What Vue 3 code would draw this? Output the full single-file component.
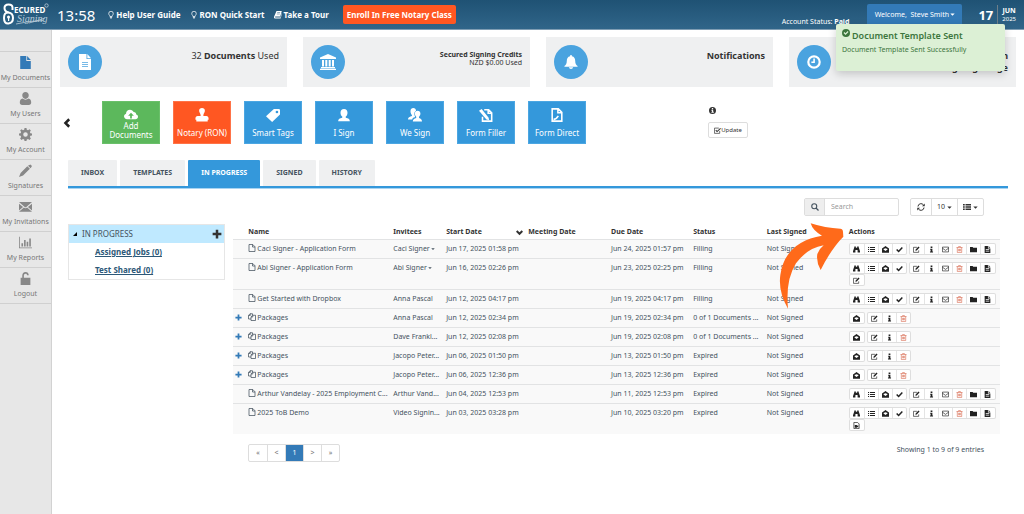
<script setup>
import { h } from 'vue'

const line = 'fill="none" stroke="currentColor" stroke-width="1.5"'
const icons = {
  file: '<path d="M1.500 0H9v6h5.500v10h-13z"/><path d="M10 0l4.500 5H10z"/>',
  fileText: '<path fill-rule="evenodd" d="M2 0h7.500v5H14v11H2zM5 8v.8h6V8zm0 2v.8h6V10zm0 2v.8h6V12z"/><path d="M10.300 0L14 4.200h-3.700z"/>',
  user: '<path d="M8 0c2.500 0 4 1.600 4 4S10.300 8.500 8 8.500 4 6.400 4 4 5.500 0 8 0zM4.500 8c1 1 2.200 1.400 3.500 1.400s2.500-.4 3.500-1.400C14 8.300 15 10 15 13c0 2-1 3-3 3H4c-2 0-3-1-3-3 0-3 1-4.700 3.500-5z"/>',
  cog: '<path fill-rule="evenodd" d="M6.800 0h2.400l.4 2.200 1.500.6 1.900-1.300 1.600 1.600-1.200 1.900.6 1.500 2 .4v2.300l-2 .4-.6 1.600 1.200 1.800-1.600 1.700-1.900-1.300-1.500.6-.4 2H6.800l-.4-2-1.500-.6L3 14.700 1.400 13l1.200-1.800L2 9.600l-2-.4V6.900l2-.4.6-1.500-1.200-1.900L3 1.500l1.900 1.300 1.500-.6zM8 5.200a2.800 2.800 0 1 0 0 5.600 2.800 2.800 0 0 0 0-5.600z"/>',
  pencil: '<path d="M11 2l3-1.500L16 2.500 14.300 5.200zM10.200 2.800l3.200 3L5 14l-5 2 2-5z"/>',
  mail: '<path d="M0 2.500h16L9 8.500q-1 .8-2 0zM0 4.500l5 4-5 4.500zM16 4.500l-5 4 5 4.500zM0 14.500L6 9.300q2 1.600 4 0l6 5.200z"/>',
  chart: '<path d="M0 1h1v13h15v1H0zM3 9h2v4H3zM6.200 5h2v8h-2zM9.400 7h2v6h-2zM12.600 3h2v10h-2z"/>',
  unlock: '<path d="M2 7h2V4.500C4 1.800 5.600 0 8 0s4 1.500 4 4h-2c0-1.300-.8-2-2-2s-2 .9-2 2.500V7h8v9H2z"/>',
  bulb: '<path ' + line + ' d="M5.800 11C5.800 8.500 3.500 8 3.500 5a4.500 4.500 0 0 1 9 0c0 3-2.300 3.500-2.300 6zM5.800 13h4.400M7 15.200h2"/>',
  book: '<path fill-rule="evenodd" d="M5 0h10.500L12.500 11H3c-1.500 0-1.500 2 0 2h10L15.500 4l.5 1-2.800 10H3c-3 0-3.500-2-2.700-4zM6.500 3l-.3 1.200h6L12.500 3zM5.800 5.500l-.3 1.200h6l.3-1.200z"/>',
  bank: '<path d="M8 0l8 3.500V5H0V3.500zM2 6h2v6.500H2zM5.300 6h2v6.500h-2zM8.700 6h2v6.500h-2zM12 6h2v6.500h-2zM1 13h14v1.200H1zM0 14.800h16V16H0z"/>',
  bell: '<path d="M8 0c.8 0 1 .5 1 1.300 2.800.6 3.800 2.700 3.800 5.200 0 3.500 1.200 4.800 2.700 6V13.500H.5v-1c1.500-1.200 2.700-2.500 2.700-6 0-2.500 1-4.600 3.800-5.200C7 .5 7.200 0 8 0zM5.500 14h5Q10 16 8 16t-2.500-2z"/>',
  clock: '<circle cx="8" cy="8" r="6.500" fill="none" stroke="currentColor" stroke-width="2.500"/><path d="M7.200 4h1.800v5H5V7.500h2.200z"/>',
  cloud: '<path fill-rule="evenodd" d="M3.500 14C1.500 14 0 12.500 0 10.700c0-1.500 1-2.700 2.300-3.100C2.300 4.600 4.500 3 6.800 3c2 0 3.600 1.100 4.200 2.800 2 0 3 1.300 2.900 2.800 1.300.3 2.100 1.300 2.100 2.600 0 1.700-1.200 2.800-3 2.800zM8 6.500L4.700 10H7v3h2v-3h2.300z"/>',
  stamp: '<path d="M8 0c2 0 3.300 1.400 3.300 3C11.300 5 9.500 6 9.500 9H13c1.500 0 2.500 1 2.500 3v1.500h-1V15.500h-13V13.500h-1V12c0-2 1-3 2.500-3h3.500c0-3-1.800-4-1.800-6 0-1.600 1.300-3 3.300-3z"/>',
  tag: '<path fill-rule="evenodd" d="M9 1h6l1 1v5.500L7 16 0 9.500zM12.500 3a1.500 1.500 0 1 0 0 3 1.500 1.500 0 0 0 0-3z"/>',
  person: '<path d="M8 1c2.600 0 4 1.700 4 4.300 0 2-.8 3.500-2 4.400v1.500c3 .8 4.500 1.300 4.700 3.800H1.300c.2-2.500 1.700-3 4.700-3.800V9.700C4.800 8.800 4 7.300 4 5.300 4 2.700 5.400 1 8 1z"/>',
  people: '<path d="M6 0c2 0 3 1 3.200 3C7.400 4 7 6 7.400 8l.8 2.400c-2 .6-3 1-3.400 2.600H0c0-2.600 2-3 4.500-4V8C3.300 7 2.700 5 2.900 3.200 3 1 4.200 0 6 0z"/><path d="M11 3c2 0 3.200 1.300 3.200 3.400 0 1.600-.6 2.800-1.600 3.600v1.300c2 .8 3.400 1.500 3.400 4.200H5.500c0-2.700 1.500-3.400 3.900-4.200V10c-1-.8-1.600-2-1.600-3.600C7.800 4.300 9 3 11 3z"/>',
  formFill: '<path fill="none" stroke="currentColor" stroke-width="1.800" d="M6 2h5l3.500 3.500V15H4v-5M10.500 2v4h4"/><path d="M0 3l3-2 8 10 .5 3L8.500 13z"/>',
  formDirect: '<path fill="none" stroke="currentColor" stroke-width="1.800" d="M2.500 1h7L13.500 5v10h-11zM9 1v4.500h4.500M4 13q3 0 5.500-4"/>',
  chevron: '<path fill="none" stroke="currentColor" stroke-width="4" d="M11.500 2L5.500 8l6 6"/>',
  chevDown: '<path fill="none" stroke="currentColor" stroke-width="4.500" d="M1.500 4.500L8 11l6.500-6.500"/>',
  info: '<path fill-rule="evenodd" d="M8 0a8 8 0 1 0 0 16A8 8 0 0 0 8 0zM6.500 2.500h3v2.500h-3zM5.500 6.500h4V11h1.500v2H5.500v-2H7V8.500H5.500z"/>',
  checkBox: '<path fill="none" stroke="currentColor" stroke-width="1.600" d="M13 9v5.500H1V2.500h10"/><path fill="none" stroke="currentColor" stroke-width="2.400" d="M4 7l3 3.500L15 3"/>',
  okCircle: '<path fill-rule="evenodd" d="M8 0a8 8 0 1 0 0 16A8 8 0 0 0 8 0zM3 8l1.800-1.800L7 8.300l4.300-4.200L13 5.900l-6 6z"/>',
  search: '<circle cx="6.500" cy="6.500" r="5" fill="none" stroke="currentColor" stroke-width="2.200"/><path stroke="currentColor" stroke-width="2.600" d="M10 10l5 5"/>',
  refresh: '<path fill="none" stroke="currentColor" stroke-width="2" d="M2 7a6 6 0 0 1 11-3M14 9a6 6 0 0 1-11 3"/><path d="M15.500 1v5.500H10zM.5 15V9.500H6z"/>',
  list: '<path d="M0 2h3.500v3H0zM5 2h11v3H5zM0 6.500h3.500v3H0zM5 6.500h11v3H5zM0 11h3.500v3H0zM5 11h11v3H5z"/>',
  lines: '<path d="M0 2.500h2.500v2H0zM4.500 2.500H16v2H4.500zM0 7h2.500v2H0zM4.500 7H16v2H4.500zM0 11.500h2.500v2H0zM4.500 11.500H16v2H4.500z"/>',
  plus: '<path d="M6 1h4v5h5v4h-5v5H6v-5H1V6h5z"/>',
  page: '<path ' + line + ' d="M2 1h7.500L14 5.500V15H2zM9 1v5h5"/>',
  pages: '<path ' + line + ' d="M6 12H1V5l3-3.500h5V4M4.500 1.500V5H1M6 15V8l3-3.500h6V15zM9.500 4.500V8H6"/>',
  binoculars: '<path d="M3 1h3.500v3h3V1H13v2l3 9v3h-5.500V9h-5v6H0v-3l3-9z"/>',
  openMail: '<path fill-rule="evenodd" d="M8 0l8 5.500V15.500H0V5.500zM3.500 7v1.200L8 11.500l4.500-3.300V7L8 5z"/>',
  check: '<path fill="none" stroke="currentColor" stroke-width="3.500" d="M1.500 8l4.500 4.500L14.500 3.500"/>',
  edit: '<path ' + line + ' d="M13 10v4.500H1V3h8"/><path d="M6 8l6.500-7L15 3.500 8.500 10.500 5.500 11z"/>',
  i: '<path d="M6 1h4v3.500H6zM5 6h5v6.500h1.500V15h-7v-2.500H6V8.500H5z"/>',
  envelope: '<path ' + line + ' d="M1 2.500h14v11H1zM1 5l7 5 7-5"/>',
  trash: '<path fill="none" stroke="currentColor" stroke-width="1.600" d="M1 3.500h14M5 3.500L6 1h4l1 2.500M3 3.500V15h10V3.500M6 6.500V12M8 6.500V12M10 6.500V12"/>',
  folder: '<path d="M0 2h6l1.500 2H16v10H0z"/>',
  doc: '<path fill-rule="evenodd" d="M1.500 0H9v5.500h5.500V16h-13zM4 7.500V9h8V7.500zM4 11v1.500h8V11zM10.500 0l4 4h-4z"/>',
  video: '<path fill="none" stroke="currentColor" stroke-width="1.600" d="M2 1h8.500L14 4.500V15H2z"/><path d="M4 7h5v2l3-2v6l-3-2v2H4z"/>',
  caret: '<path d="M1 5h14l-7 7z"/>',
}
const Ic = (p) => h('svg', { viewBox: '0 0 16 16', fill: 'currentColor', 'aria-hidden': 'true', innerHTML: icons[p.n] })
Ic.props = ['n']

const nav = [
  ['My Documents', 'file'], ['My Users', 'user'], ['My Account', 'cog'], ['Signatures', 'pencil'],
  ['My Invitations', 'mail'], ['My Reports', 'chart'], ['Logout', 'unlock'],
]
const tiles = [
  ['Add Documents', 'cloud', 'green'], ['Notary (RON)', 'stamp', 'orange'], ['Smart Tags', 'tag', ''], ['I Sign', 'person', ''],
  ['We Sign', 'people', ''], ['Form Filler', 'formFill', ''], ['Form Direct', 'formDirect', ''],
]
const tabs = ['INBOX', 'TEMPLATES', 'IN PROGRESS', 'SIGNED', 'HISTORY']
const heads = ['', 'Name', 'Invitees', 'Start Date', 'Meeting Date', 'Due Date', 'Status', 'Last Signed', 'Actions']
const rows = [
  { name: 'Caci Signer - Application Form', who: 'Caci Signer', menu: true, start: 'Jun 17, 2025 01:58 pm', due: 'Jun 24, 2025 01:57 pm', status: 'Filling' },
  { name: 'Abi Signer - Application Form', who: 'Abi Signer', menu: true, start: 'Jun 16, 2025 02:26 pm', due: 'Jun 23, 2025 02:25 pm', status: 'Filling', extra: 'edit' },
  { name: 'Get Started with Dropbox', who: 'Anna Pascal', start: 'Jun 12, 2025 04:17 pm', due: 'Jun 19, 2025 04:17 pm', status: 'Filling' },
  { pack: true, name: 'Packages', who: 'Anna Pascal', start: 'Jun 12, 2025 02:34 pm', due: 'Jun 19, 2025 02:34 pm', status: '0 of 1 Documents ...' },
  { pack: true, name: 'Packages', who: 'Dave Frankl...', start: 'Jun 12, 2025 02:08 pm', due: 'Jun 19, 2025 02:08 pm', status: '0 of 1 Documents ...' },
  { pack: true, name: 'Packages', who: 'Jacopo Peter...', start: 'Jun 06, 2025 01:50 pm', due: 'Jun 13, 2025 01:50 pm', status: 'Expired' },
  { pack: true, name: 'Packages', who: 'Jacopo Peter...', start: 'Jun 06, 2025 12:36 pm', due: 'Jun 13, 2025 12:36 pm', status: 'Expired' },
  { name: 'Arthur Vandelay - 2025 Employment C...', who: 'Arthur Vand...', start: 'Jun 04, 2025 12:53 pm', due: 'Jun 11, 2025 12:53 pm', status: 'Expired' },
  { name: '2025 ToB Demo', who: 'Video Signin...', start: 'Jun 03, 2025 03:28 pm', due: 'Jun 10, 2025 03:20 pm', status: 'Expired', extra: 'video' },
]
const labels = { binoculars: 'View', lines: 'Details', openMail: 'Open', check: 'Complete', edit: 'Edit', i: 'Info', envelope: 'Send', trash: 'Delete', folder: 'Move', doc: 'Log', video: 'Video' }
const groups = (r) => r.pack
  ? [['openMail'], ['edit', 'i', 'trash']]
  : [['binoculars', 'lines', 'openMail', 'check'], ['edit', 'i', 'envelope', 'trash', 'folder', 'doc']]
</script>

<template>
  <div class="page">
    <header class="top">
      <svg class="logo" viewBox="0 0 46 24" role="img" aria-label="Secured Signing">
        <g fill="none" stroke="#fff" stroke-width="2">
          <path d="M9.500 7V4.500Q9.500 1.500 5.500 1.500T1.500 5t4 4.500" />
          <path d="M5.500 9.500Q10 10 10 15t-4.500 5.500T1 15t4.500-5.500" />
        </g>
        <circle cx="5.500" cy="14" r="1.500" fill="#fff" /><path d="M5 14h1.200v4H5z" fill="#fff" />
        <text x="11" y="10" class="l1">ECURED</text>
        <text x="14" y="19" class="l2">Signing</text>
        <path d="M13 21q12-3 27-3.500M26 20q8-2 16-5" stroke="#b9cbd8" stroke-width=".8" fill="none" />
        <circle cx="43.500" cy="2.500" r="1.700" fill="none" stroke="#b9cbd8" stroke-width=".8" />
      </svg>
      <span class="time">13:58</span>
      <a href="#" class="hl"><Ic n="bulb" class="s8" />Help User Guide</a>
      <a href="#" class="hl"><Ic n="bulb" class="s8" />RON Quick Start</a>
      <a href="#" class="hl tour"><Ic n="book" class="s8" />Take a Tour</a>
      <button class="enroll">Enroll In Free Notary Class</button>
      <span class="status">Account Status: <b>Paid</b></span>
      <button class="welcome">Welcome,&nbsp; Steve Smith<Ic n="caret" class="s5" /></button>
      <span class="day">17</span>
      <span class="month"><b>JUN</b><span>2025</span></span>
    </header>

    <div class="body">
      <nav class="side">
        <a v-for="(n, k) in nav" :key="n[0]" href="#" :class="{ cur: k === 0 }"><Ic :n="n[1]" class="s13" />{{ n[0] }}</a>
      </nav>

      <main>
        <section class="stats">
          <div class="stat"><span class="disc"><Ic n="fileText" class="s16" /></span><p>32 <b>Documents</b> Used</p></div>
          <div class="stat"><span class="disc"><Ic n="bank" class="s16" /></span><p class="small"><b>Secured Signing Credits</b><br />NZD $0.00 Used</p></div>
          <div class="stat"><span class="disc"><Ic n="bell" class="s14" /></span><p><b>Notifications</b></p></div>
          <div class="stat"><span class="disc"><Ic n="clock" class="s14" /></span><p class="last"><b>Session<br />Signing Usage</b></p></div>
        </section>

        <section class="quick">
          <button class="prev" aria-label="Previous"><Ic n="chevron" class="s10" /></button>
          <div class="tiles">
            <button v-for="t in tiles" :key="t[0]" :class="['tile', t[2]]"><Ic :n="t[1]" class="s14" /><span>{{ t[0] }}</span></button>
          </div>
          <div class="update">
            <Ic n="info" class="s7" />
            <button><Ic n="checkBox" class="s7" />Update</button>
          </div>
        </section>

        <div class="tabs">
          <button v-for="t in tabs" :key="t" :class="{ on: t === 'IN PROGRESS' }">{{ t }}</button>
        </div>

        <div class="tools">
          <div class="search">
            <label for="q" aria-label="Search"><Ic n="search" class="s8" /></label>
            <input id="q" type="text" placeholder="Search" />
          </div>
          <div class="group">
            <button aria-label="Refresh"><Ic n="refresh" class="s8" /></button>
            <button>10<Ic n="caret" class="s5" /></button>
            <button aria-label="Columns"><Ic n="list" class="s8" /><Ic n="caret" class="s5" /></button>
          </div>
        </div>

        <div class="work">
          <aside class="tree">
            <div class="tree-head"><svg class="tri" viewBox="0 0 4 4"><path d="M4 0v4H0z" /></svg>IN PROGRESS<button aria-label="Add folder"><Ic n="plus" class="s10" /></button></div>
            <a href="#">Assigned Jobs (0)</a>
            <a href="#">Test Shared (0)</a>
          </aside>

          <div class="list">
            <table>
              <colgroup><col v-for="(x, k) in heads" :key="k" :class="'c' + k" /></colgroup>
              <thead>
                <tr><th v-for="t in heads" :key="t">{{ t }}<Ic v-if="t === 'Start Date'" n="chevDown" class="s7 sort" /></th></tr>
              </thead>
              <tbody>
                <tr v-for="r in rows" :key="r.start">
                  <td class="ex"><button v-if="r.pack" aria-label="Expand"><Ic n="plus" class="s7" /></button></td>
                  <td><Ic :n="r.pack ? 'pages' : 'page'" class="s8 doc" />{{ r.name }}</td>
                  <td>{{ r.who }}<Ic v-if="r.menu" n="caret" class="s4" /></td>
                  <td>{{ r.start }}</td>
                  <td></td>
                  <td>{{ r.due }}</td>
                  <td>{{ r.status }}</td>
                  <td>Not Signed</td>
                  <td>
                    <div class="acts">
                      <span v-for="(g, k) in groups(r)" :key="k" class="bar">
                        <button v-for="a in g" :key="a" :class="a" :aria-label="labels[a]"><Ic :n="a" class="s7" /></button>
                      </span>
                    </div>
                    <div v-if="r.extra" class="acts">
                      <span class="bar"><button :aria-label="labels[r.extra]"><Ic :n="r.extra" class="s7" /></button></span>
                    </div>
                  </td>
                </tr>
              </tbody>
            </table>
            <div class="foot">
              <div class="pager">
                <button>«</button><button>&lt;</button><button class="on">1</button><button>&gt;</button><button>»</button>
              </div>
              <span>Showing 1 to 9 of 9 entries</span>
            </div>
          </div>
        </div>
      </main>
    </div>

    <div class="toast" role="status">
      <strong><Ic n="okCircle" class="s8" />Document Template Sent</strong>
      <span>Document Template Sent Successfully</span>
    </div>
    <svg class="arrow" viewBox="0 0 240 270" aria-hidden="true">
      <path fill="#ff6a1a" d="M122 10Q165 24 211 26Q219 27 219 36L220 50Q184 86 152 150Q138 126 142 102Q148 86 161 76Q112 84 78 130Q46 180 54 266Q24 215 31 165Q45 66 156 47Q128 32 122 10Z" />
    </svg>
  </div>
</template>

<style>
body { margin: 0; background: #fff; }
</style>

<style scoped>
.page { position: relative; min-height: 100vh; display: flex; flex-direction: column; font: 7px/12px "Noto Sans", "Open Sans", sans-serif; color: #44525e; overflow: hidden; }
button, input { font: inherit; color: inherit; padding: 0; margin: 0; border: 0; background: none; box-sizing: border-box; }
a { color: inherit; text-decoration: none; }
svg { flex: none; }
.s4 { width: 4px; height: 4px; }
.s5 { width: 5px; height: 5px; }
.s7 { width: 7px; height: 7px; }
.s8 { width: 8px; height: 8px; }
.s10 { width: 10px; height: 10px; }
.s13 { width: 13px; height: 13px; }
.s14 { width: 14px; height: 14px; }
.s16 { width: 16px; height: 16px; }

.top { display: flex; align-items: center; height: 29px; border-bottom: 1px solid #7f9db3; background: linear-gradient(#1f5274, #306589); color: #fff; padding: 0 8px 0 3px; }
.logo { width: 46px; height: 24px; }
.l1 { font: bold 8px "Noto Sans", sans-serif; fill: #fff; }
.l2 { font: italic 10px "Liberation Serif", serif; fill: #b9cbd8; }
.time { font-size: 15px; margin: 0 12px 0 8px; }
.hl { display: flex; align-items: center; font-size: 8px; font-weight: 700; margin-right: 10px; white-space: nowrap; }
.hl svg { margin-right: 1px; }
.hl.tour { margin-right: 14px; }
.enroll { background: #ff5722; border-radius: 2px; font-size: 8px; font-weight: 700; height: 19px; padding: 0 4px; white-space: nowrap; }
.status { margin-left: auto; padding-top: 14px; white-space: nowrap; }
.welcome { display: flex; align-items: center; justify-content: center; gap: 1px; align-self: flex-end; background: #337ab7; border-radius: 2px 2px 0 0; height: 25px; width: 95px; margin: 0 16px 0 18px; padding-bottom: 4px; white-space: nowrap; }
.day { font-size: 13px; font-weight: 700; padding-right: 4px; line-height: 20px; border-right: 1px solid #6e7f8a; }
.month { display: flex; flex-direction: column; align-items: center; padding-left: 4px; font-size: 6px; line-height: 8px; }
.month b { font-size: 7px; }

.body { flex: 1; display: flex; }
.side { width: 51px; flex: none; background: #e7e7e7; border-right: 1px solid #d2d2d2; padding-top: 21px; }
.side a { display: flex; flex-direction: column; align-items: center; justify-content: center; gap: 3px; height: 35px; border-top: 1px solid #d0d0d0; color: #777; white-space: nowrap; }
.side a svg { color: #888; }
.side a.cur svg { color: #337ab7; }
.side a:last-child { border-bottom: 1px solid #d0d0d0; }

main { flex: 1; min-width: 0; padding: 7px 8px 0; }
.stats { display: grid; grid-template-columns: repeat(4, 1fr); gap: 16px; }
.stat { background: #eff0f1; height: 50px; display: flex; align-items: center; justify-content: space-between; padding: 0 8px; box-sizing: border-box; color: #333; }
.disc { width: 34px; height: 34px; border-radius: 50%; background: #4aa3df; color: #fff; display: flex; align-items: center; justify-content: center; }
.stat p { margin: 0 0 12px; font-size: 9px; text-align: right; }
.stat p.small { font-size: 7px; line-height: 8px; margin-bottom: 6px; }
.stat p.last { margin-bottom: 0; }

.quick { display: flex; align-items: center; margin-top: 14px; padding-left: 2px; }
.prev { width: 12px; display: flex; color: #222; }
.tiles { display: flex; gap: 13px; margin-left: 28px; }
.tile { width: 58px; height: 43px; background: #3498db; border: 1px solid #4ba6e2; color: #fff; display: flex; flex-direction: column; align-items: center; justify-content: center; gap: 6px; font-size: 8px; line-height: 9px; padding: 0 3px; }
.tile.green { background: #5cb85c; border-color: #6ac06a; gap: 0; }
.tile.orange { background: #ff5722; border-color: #ff7347; }
.update { display: flex; flex-direction: column; align-items: flex-start; gap: 8px; margin-left: 122px; color: #333; }
.update > svg { margin-left: 1px; }
.update button { display: flex; align-items: center; justify-content: center; font-size: 6px; width: 40px; height: 16px; border: 1px solid #ddd; border-radius: 2px; }

.tabs { display: flex; gap: 3px; margin: 16px 8px 0; border-bottom: 2px solid #3498db; box-shadow: 0 1px #a9d4f2; }
.tabs button { background: #eff0f1; height: 26px; padding: 0 13px; font-weight: 700; border-radius: 1px 1px 0 0; white-space: nowrap; }
.tabs .on { background: #3498db; color: #fff; }

.tools { display: flex; justify-content: flex-end; gap: 11px; margin: 10px 32px 0 0; }
.search { display: flex; width: 95px; height: 18px; border: 1px solid #ddd; border-radius: 2px; box-sizing: border-box; }
.search label { width: 20px; flex: none; background: #eee; border-right: 1px solid #ddd; display: flex; align-items: center; justify-content: center; box-sizing: border-box; }
.search input { min-width: 0; flex: 1; padding-left: 6px; }
.search input::placeholder { color: #999; opacity: 1; }
.group { display: flex; height: 18px; border: 1px solid #ddd; border-radius: 2px; box-sizing: border-box; color: #333; }
.group button { display: flex; align-items: center; justify-content: center; gap: 2px; width: 26px; }
.group button:first-child { width: 20px; }
.group button + button { border-left: 1px solid #ddd; }

.work { display: flex; align-items: flex-start; gap: 8px; margin: 8px 16px 0 8px; }
.tree { width: 157px; flex: none; box-sizing: border-box; border: 1px solid #e6e6e6; }
.tree-head { display: flex; align-items: center; height: 18px; background: #bfe9ff; padding: 0 2px 0 4px; font-size: 8px; }
.tree-head button { margin-left: auto; color: #333; display: flex; }
.tri { width: 4px; height: 4px; margin-right: 5px; }
.tree a { display: block; margin-left: 26px; line-height: 18px; font-size: 8px; font-weight: 700; color: #2c5878; text-decoration: underline; }

.list { flex: 1; min-width: 0; }
table { width: 100%; border-collapse: collapse; table-layout: fixed; }
.c0 { width: 2%; } .c1 { width: 18.900%; } .c2 { width: 6.900%; } .c3 { width: 10.700%; } .c4 { width: 10.800%; }
.c5 { width: 10.700%; } .c6 { width: 9.600%; } .c7 { width: 10.700%; } .c8 { width: 19.700%; }
th { text-align: left; padding: 2px 0 1px; color: #333; white-space: nowrap; }
th .sort { float: right; margin: 3px 5px 0 0; }
td { padding: 3px 0; border-top: 1px solid #e2e3e4; background: #f9f9f9; vertical-align: top; white-space: nowrap; }
.ex button { display: block; margin: 2px 0 0 2px; color: #337ab7; line-height: 7px; }
td svg { vertical-align: -1px; }
.doc { margin-right: 1px; }
td .s4 { vertical-align: 0; margin-left: 1px; }
.ex svg { display: block; }
.acts { display: flex; gap: 4px; height: 11px; padding: 1px 0 0 1px; }
.bar { display: flex; border-radius: 1px; background: #fff; box-shadow: 0 0 0 1px #dedede; color: #222; height: 10px; }
.bar button { width: 14px; display: flex; align-items: center; justify-content: center; line-height: 7px; }
.bar button + button { border-left: 1px solid #e4e4e4; }
.bar .trash { color: #dd7b64; }

.foot { display: flex; justify-content: space-between; align-items: flex-start; padding: 10px 16px 0 15px; }
.pager { display: flex; border: 1px solid #ddd; border-radius: 2px; }
.pager button { width: 18px; height: 16px; color: #777; }
.pager button + button { border-left: 1px solid #ddd; }
.pager .on { background: #337ab7; color: #fff; }

.toast { position: absolute; right: 19px; top: 24px; width: 169px; height: 47px; box-sizing: border-box; background: #dcf0d5; border-radius: 2px; box-shadow: 0 3px 8px rgba(0, 0, 0, .18); color: #3c763d; padding: 5px 6px; }
.toast strong { display: flex; align-items: flex-start; gap: 2px; font-size: 9px; line-height: 14px; font-weight: 600; }
.toast span { display: block; line-height: 14px; }
.arrow { position: absolute; right: 174px; top: 220px; width: 80px; height: 90px; }
</style>
